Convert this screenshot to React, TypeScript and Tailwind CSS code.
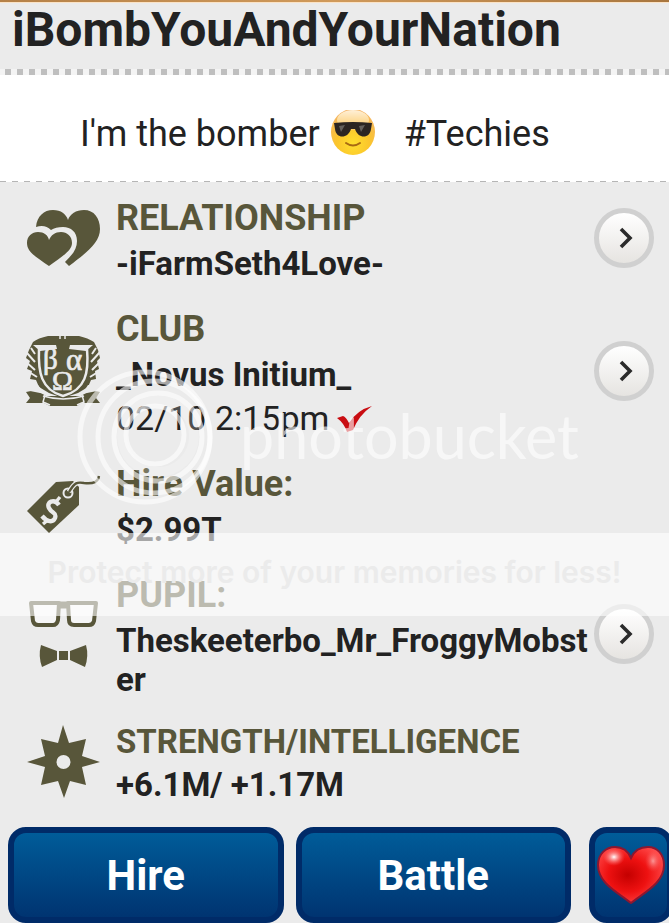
import type { ReactNode } from "react";
import { useId } from "react";

const HeartsIcon = () => (
  <svg viewBox="0 0 75 58" className="h-[58px] w-[75px]" aria-hidden="true">
    <path
      fill="#58563a"
      d="M10 18 C11 7 18 1 27 1 C35 1 40 5 42 11 C44 5 50 1 58 1 C68 1 74 9 74 20 C74 34 60 44 43 57 L39 53 C47 45 51 40 51 32 C51 23 45 18 37 18 C32 18 28 19 25 21 C21 17 16 16 10 18 Z"
    />
    <path
      fill="#58563a"
      d="M23 57 C10 48 1 43 1 34 C1 27 6 23 12 23 C18 23 22 26 23 31 C25 26 29 23 35 23 C41 23 46 27 46 34 C46 42 35 48 23 57 Z"
    />
  </svg>
);

const CrestIcon = () => (
  <svg viewBox="0 0 75 70" className="h-[70px] w-[75px]" aria-hidden="true">
    <g fill="#58563a">
      <path d="M7 6 Q12 2 22 0 H53 Q62 2 68 6 L72 14 L74 22 L71 25 L73 33 L69 35 L70 43 L65 44 L62 51 L52 57 L37 62 L23 57 L13 51 L10 44 L4 43 L6 35 L1 33 L4 25 L0 22 L3 14 Z" />
      <path d="M0 56 L10 54 L20 60 H55 L65 54 L74 56 L70 62 L74 67 L56 67 L51 70 H24 L18 67 L0 67 L4 62 Z" />
    </g>
    <g fill="none" stroke="#ebebeb" strokeWidth="2">
      <path d="M13 13 C12 36 15 54 37 60 C60 54 63 36 61 13" strokeWidth="2.5" />
      <path d="M0 16 L9 26 M0 26 L9 34 M3 36 L11 41 M74 16 L65 26 M74 26 L66 34 M72 36 L64 41" />
      <path d="M5 12 L9 18 M70 12 L66 18" />
      <path d="M34 0 V3 M39 0 V3" strokeWidth="1.5" />
      <path d="M19 59 L17 66 L24 69 M56 59 L58 66 L51 69" strokeWidth="1.5" />
      <path d="M17 60 Q37 66 58 60" strokeWidth="1.5" />
    </g>
    <path d="M7 9 H30 L31 13 L14 15 Z M67 9 H44 L43 13 L60 15 Z" fill="#ebebeb" />
    <path d="M1 49 L12 49 L19 58 L4 55 Z M74 49 L62 49 L56 58 L71 55 Z" fill="#ebebeb" />
    <g fill="#ebebeb" stroke="#ebebeb" strokeWidth="0.7" fontFamily="Liberation Serif, serif">
      <text x="17" y="33" fontSize="29">β</text>
      <text x="40" y="34" fontSize="31">α</text>
      <text x="26" y="54" fontSize="28">Ω</text>
    </g>
  </svg>
);

const TagIcon = () => (
  <svg viewBox="0 0 75 60" className="h-[60px] w-[75px]" aria-hidden="true">
    <path fill="#58563a" d="M1 37 L30 8 L47 7 L53 13 L53 31 L23 59 Z" />
    <circle cx="42" cy="19" r="4.5" fill="none" stroke="#ebebeb" strokeWidth="2" />
    <path d="M43 18 C49 8 51 8 58 9 C68 11 72 9 73 1" fill="none" stroke="#ebebeb" strokeWidth="5" />
    <path d="M43 18 C49 8 51 8 58 9 C68 10 72 8 73 2" fill="none" stroke="#58563a" strokeWidth="2.4" />
    <g fill="none" stroke="#ebebeb" strokeWidth="4.4">
      <path d="M33 31 C28 24 20 28 23 34 C26 40 31 38 29 44 C27 49 21 48 16 42" />
      <path d="M34 23 L29 29 M22 46 L17 50" strokeWidth="3.4" />
    </g>
  </svg>
);

const PupilIcon = () => (
  <svg viewBox="0 0 75 70" className="h-[70px] w-[75px]" aria-hidden="true">
    <path
      fill="#f6f6f6"
      stroke="#58563a"
      strokeWidth="4"
      strokeLinejoin="round"
      d="M5 4 H33 L32 21 Q31 26 27 26 H12 Q8 26 7 22 Z M42 4 H70 L68 22 Q67 26 63 26 H48 Q43 26 43 21 Z"
    />
    <path d="M31 6 H44" stroke="#58563a" strokeWidth="7" />
    <path
      fill="#58563a"
      d="M15 46 L31 52 V61 L16 68 Q12 57 15 46 Z M60 46 L44 52 V61 L59 68 Q63 57 60 46 Z M33 52 H42 V61 H33 Z"
    />
  </svg>
);

const StarIcon = () => (
  <svg viewBox="0 0 75 75" className="h-[75px] w-[75px]" aria-hidden="true">
    <path
      fill="#58563a"
      fillRule="evenodd"
      d="M37 1 L43 19 L60 15 L56 32 L74 38 L56 43 L60 61 L44 57 L38 74 L32 57 L15 61 L19 43 L1 38 L19 32 L15 15 L32 19 Z M37.500 31 A7 7 0 1 0 37.500 45 A7 7 0 1 0 37.500 31 Z"
    />
  </svg>
);

const CoolEmoji = () => (
  <svg viewBox="0 3 46 48" className="h-12 w-[46px]" role="img" aria-label="cool">
    <defs>
      <radialGradient id="face" cx="0.5" cy="0.75" r="0.75">
        <stop offset="0" stopColor="#ffdf2e" />
        <stop offset="0.5" stopColor="#fbc52c" />
        <stop offset="1" stopColor="#f3b36a" />
      </radialGradient>
      <linearGradient id="shine" x1="0" y1="0" x2="0" y2="1">
        <stop offset="0" stopColor="#fff0d8" />
        <stop offset="1" stopColor="#fbc860" />
      </linearGradient>
    </defs>
    <ellipse cx="23" cy="25" rx="22" ry="23" fill="url(#face)" />
    <ellipse cx="23" cy="13" rx="16" ry="10" fill="url(#shine)" />
    <path
      d="M4 16 Q23 14 42 16 L41 22 C40 32 28 32 25 22 H21 C18 32 6 32 5 22 Z"
      fill="#2b2522"
    />
    <path d="M9 19 L15 18 L11 25 Z M29 19 L35 18 L31 25 Z" fill="#64605c" />
    <path d="M16 36 Q23 41 30 36" fill="none" stroke="#a86a12" strokeWidth="2" strokeLinecap="round" />
  </svg>
);

const CheckIcon = () => (
  <svg viewBox="0 0 36 26" className="h-[26px] w-9" role="img" aria-label="active">
    <path d="M0 12 L6 10 Q9 11 12 17 Q20 4 35 0 Q22 9 16 24 L10 26 Q7 17 0 12 Z" fill="#c90d12" />
  </svg>
);

const HeartIcon = () => (
  <svg viewBox="0 0 68 60" className="h-[60px] w-[68px] shrink-0" aria-hidden="true">
    <defs>
      <radialGradient id="heart" cx="0.45" cy="0.5" r="0.6">
        <stop offset="0" stopColor="#c40000" />
        <stop offset="0.5" stopColor="#ee1111" />
        <stop offset="1" stopColor="#ff4a4a" />
      </radialGradient>
      <radialGradient id="glow">
        <stop offset="0" stopColor="#fff" />
        <stop offset="1" stopColor="#ff6b6b" stopOpacity="0" />
      </radialGradient>
    </defs>
    <path
      d="M34 58 C20 47 1 38 1 20 C1 9 9 2 18 2 C26 2 31 6 34 13 C37 6 43 2 51 2 C60 2 67 9 67 20 C67 38 48 47 34 58 Z"
      fill="url(#heart)"
      stroke="#8c1730"
      strokeWidth="2"
    />
    <ellipse cx="17" cy="12" rx="11" ry="9" fill="url(#glow)" />
    <ellipse cx="56" cy="16" rx="8" ry="11" fill="url(#glow)" opacity="0.5" />
  </svg>
);

const ArrowButton = ({ label }: { label: string }) => (
  <button
    type="button"
    aria-label={label}
    className="flex size-[60px] shrink-0 items-center justify-center rounded-full border-[5px] border-[#d0d0d0] bg-linear-to-b from-white to-[#e6e4e1]"
  >
    <svg viewBox="0 0 16 22" className="ml-1 h-[22px] w-4" aria-hidden="true">
      <path d="M3 2 L12 11 L3 20" fill="none" stroke="#2b2b2b" strokeWidth="3.600" />
    </svg>
  </button>
);

interface RowProps {
  icon: ReactNode;
  title: string;
  value: string;
  children?: ReactNode;
  arrow?: boolean;
  compact?: boolean;
}

const Row = ({ icon, title, value, children, arrow, compact }: RowProps) => {
  const id = useId();

  return (
    <section aria-labelledby={id} className="flex items-center pr-[15px] pl-[26px]">
      <div className="flex w-[75px] shrink-0 justify-center">{icon}</div>
      <div className="ml-[15px] min-w-0 flex-1">
        <h2
          id={id}
          className={`font-bold text-[#58563a] ${compact ? "text-[33px] leading-[46px]" : "text-[36px] leading-[52px]"}`}
        >
          {title}
        </h2>
        <p className="text-[33px] leading-[39px] font-bold wrap-anywhere">{value}</p>
        {children}
      </div>
      {arrow && <ArrowButton label={`Open ${title}`} />}
    </section>
  );
};

const actionClass =
  "flex h-24 items-center justify-center rounded-[18px] border-[6px] border-[#002b68] bg-linear-to-b from-[#005c99] to-[#003471] text-[42px] font-bold text-white";

const Watermark = () => (
  <div className="pointer-events-none absolute inset-x-0 top-[368px]">
    <div className="flex h-[165px] items-start pl-[76px]">
      <svg viewBox="0 0 140 140" className="size-[140px] shrink-0" aria-hidden="true">
        <g fill="none" stroke="#fff" strokeOpacity="0.6" strokeWidth="5">
          <circle cx="69" cy="69" r="65" />
          <circle cx="78" cy="69" r="56" />
          <circle cx="82" cy="69" r="44" />
          <circle cx="79" cy="67" r="29" />
          <circle cx="82" cy="68" r="36" strokeWidth="10" strokeOpacity="0.2" />
        </g>
      </svg>
      <span className="mt-8 ml-6 font-['Lato',sans-serif] text-[61px] leading-[72px] text-white/60">
        photobucket
      </span>
    </div>
    <div className="flex h-[83px] items-center justify-center bg-white/60 pb-1">
      <span className="font-['Inter',sans-serif] text-[30px] font-semibold whitespace-nowrap text-[#ebebeb]">
        Protect more of your memories for less!
      </span>
    </div>
  </div>
);

export default function App() {
  return (
    <main className="relative overflow-hidden bg-[#ebebeb] font-['Roboto',sans-serif] text-[#222]">
      <div className="h-[3px] border-b border-[#fbe3c6] bg-linear-to-r from-[#b58148] via-[#d09a5b] to-[#a8763f]" />
      <header className="px-3 pb-3">
        <h1 className="text-[48px] leading-[54px] font-bold">iBombYouAndYourNation</h1>
      </header>
      <div className="h-[6px] bg-[repeating-linear-gradient(90deg,#f4f4f4_0_5px,#bfbfbf_5px_11px,#f4f4f4_11px_12px)]" />

      <div className="flex h-[106px] items-center bg-white pt-3 pl-20 text-[36px]">
        <span>I'm the bomber</span>
        <span className="mr-7 ml-[10px]">
          <CoolEmoji />
        </span>
        <span>#Techies</span>
      </div>
      <div className="h-px bg-[repeating-linear-gradient(90deg,#b5b5b5_0_6px,#fff_6px_12px)]" />

      <div className="flex flex-col gap-5 pt-[10px]">
        <Row icon={<HeartsIcon />} title="RELATIONSHIP" value="-iFarmSeth4Love-" arrow />
        <Row icon={<CrestIcon />} title="CLUB" value="_Novus Initium_" arrow>
          <p className="mt-[5px] flex items-center gap-2 text-[34px] leading-[39px]">
            02/10 2:15pm <CheckIcon />
          </p>
        </Row>
        <Row icon={<TagIcon />} title="Hire Value:" value="$2.99T" />
        <Row icon={<PupilIcon />} title="PUPIL:" value="Theskeeterbo_Mr_FroggyMobster" arrow />
        <Row icon={<StarIcon />} title="STRENGTH/INTELLIGENCE" value="+6.1M/ +1.17M" compact />
      </div>

      <div className="mt-[23px] flex gap-3 pl-2">
        <button type="button" className={`${actionClass} flex-1`}>
          Hire
        </button>
        <button type="button" className={`${actionClass} flex-1`}>
          Battle
        </button>
        <button type="button" aria-label="Favorite" className={`${actionClass} -mr-1 ml-[6px] w-[84px] shrink-0`}>
          <HeartIcon />
        </button>
      </div>

      <Watermark />
    </main>
  );
}
